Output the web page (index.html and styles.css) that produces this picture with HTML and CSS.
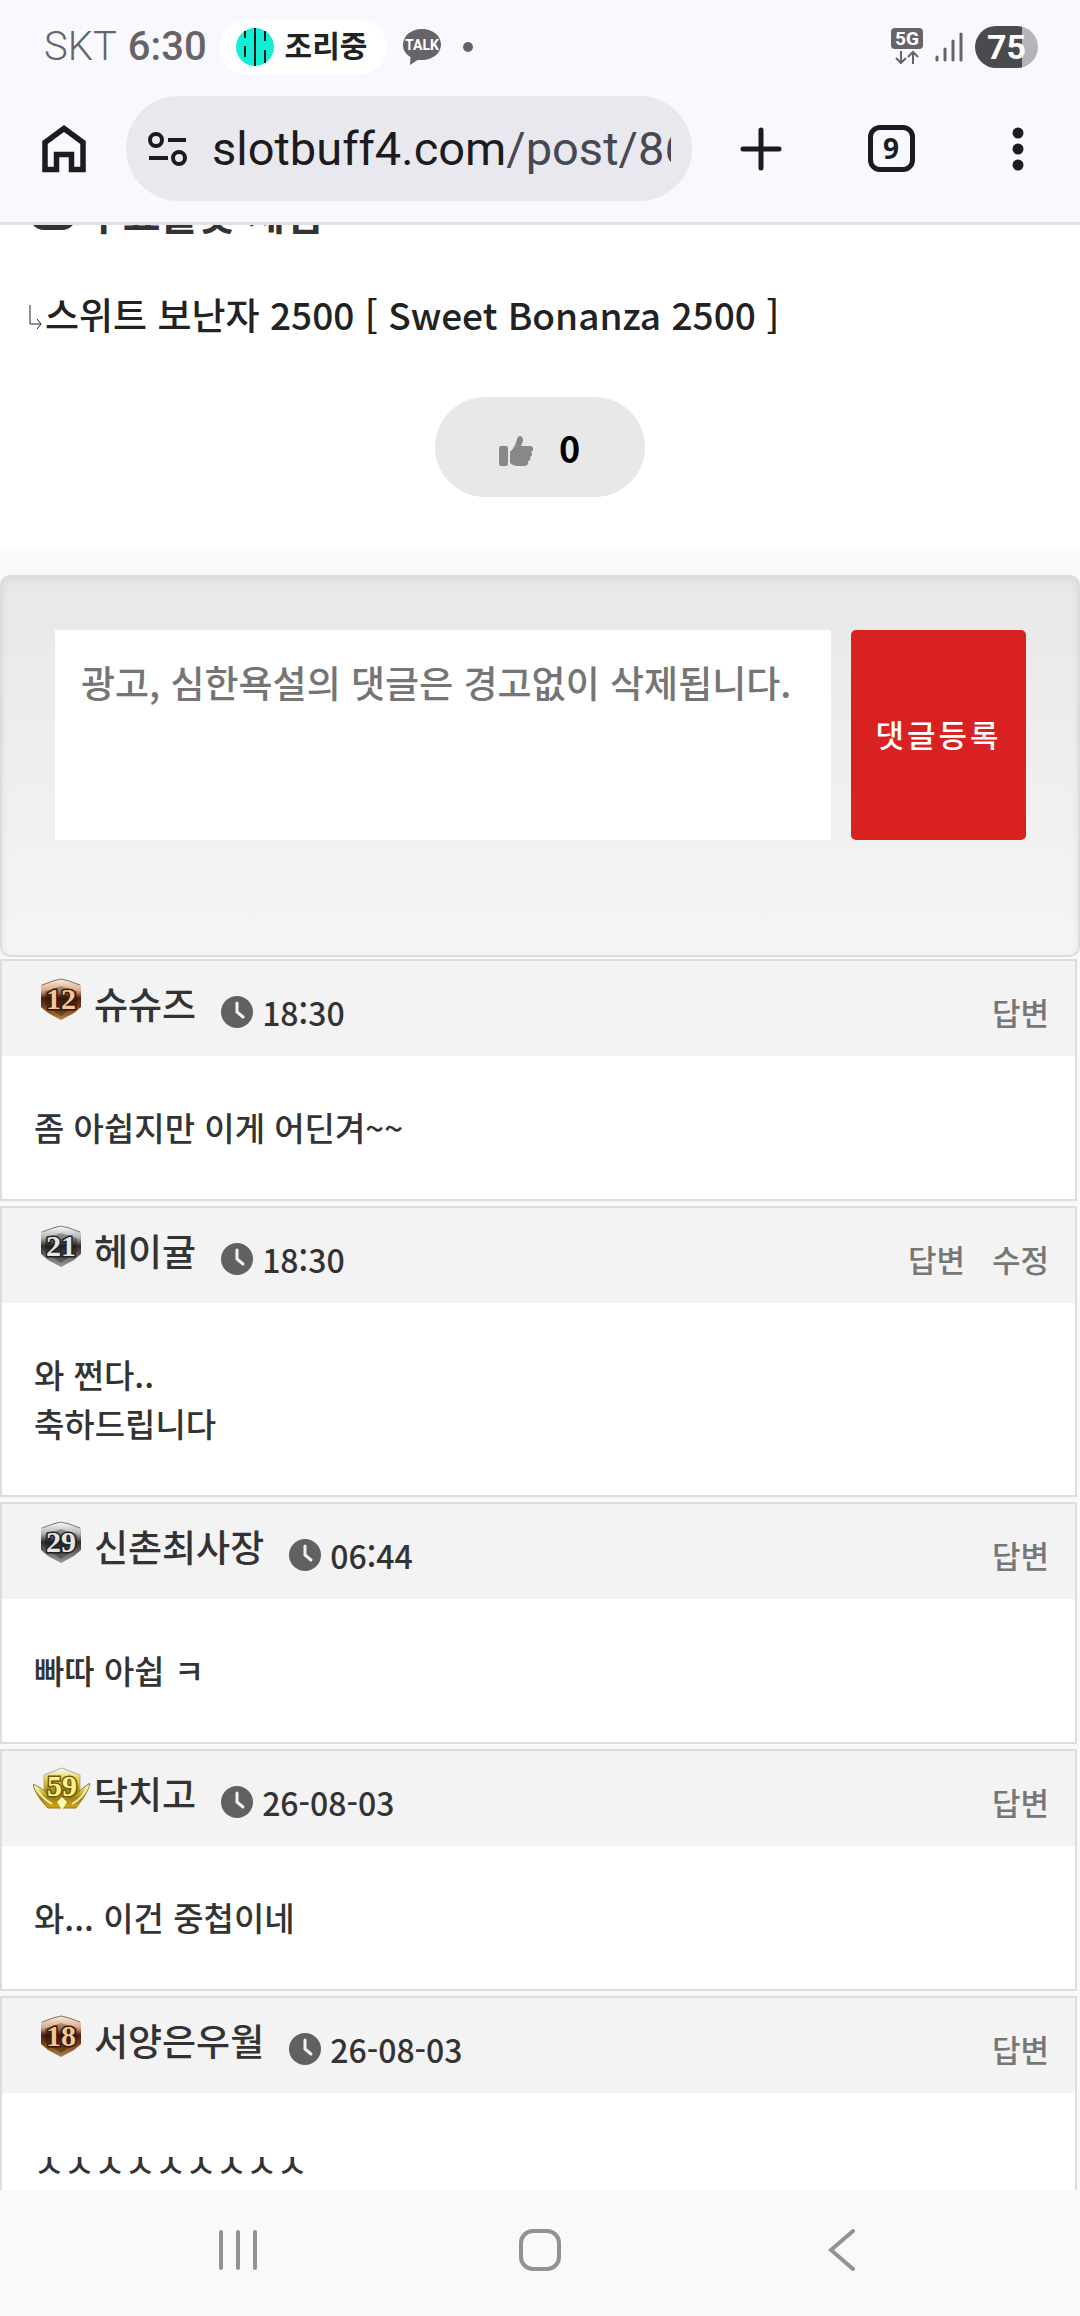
FILE: index.html
```html
<!DOCTYPE html>
<html lang="ko">
<head>
<meta charset="utf-8">
<meta name="viewport" content="width=device-width, initial-scale=1">
<title>스위트 보난자 2500</title>
<link rel="stylesheet" href="styles.css">
</head>
<body>
<svg class="defs" width="0" height="0" aria-hidden="true">
  <defs>
    <linearGradient id="bronze" x1="0" y1="0" x2="0" y2="1">
      <stop offset="0" stop-color="#fff3dc"/><stop offset=".3" stop-color="#d9a98a"/><stop offset=".48" stop-color="#4a1c0c"/><stop offset=".75" stop-color="#8a4a1c"/><stop offset="1" stop-color="#a8854c"/>
    </linearGradient>
    <linearGradient id="silver" x1="0" y1="0" x2="0" y2="1">
      <stop offset="0" stop-color="#ffffff"/><stop offset=".3" stop-color="#b5b5b5"/><stop offset=".5" stop-color="#2c2c2c"/><stop offset=".75" stop-color="#6a6a6a"/><stop offset="1" stop-color="#9a9a9a"/>
    </linearGradient>
    <linearGradient id="gold" x1="0" y1="0" x2="0" y2="1">
      <stop offset="0" stop-color="#ffffff"/><stop offset=".3" stop-color="#e2cd3c"/><stop offset=".6" stop-color="#9d8712"/><stop offset="1" stop-color="#d6a612"/>
    </linearGradient>
    <symbol id="clock" viewBox="0 0 32 32">
      <circle cx="16" cy="16" r="16" fill="#616161"/>
      <path d="M16 7v9l6 5" fill="none" stroke="#f3f3f3" stroke-width="3" stroke-linecap="round"/>
    </symbol>
    <symbol id="shield" viewBox="0 0 57 45">
      <path d="M28 2 36 4 48 9V31L41 37 28 44 15 37 8 31V9L20 4Z"/>
      <path d="M28 10 37 13 44 15V29L28 40 12 29V15L19 13Z" fill="#000" fill-opacity=".28"/>
      <path d="M9 9 20 5 28 3 36 5 47 9" fill="none" stroke="#777" stroke-width="1"/>
    </symbol>
  </defs>
</svg>

<div class="screen">
  <header class="chrome">
    <div class="status">
      <span class="carrier">SKT</span>
      <span class="time">6:30</span>
      <span class="chip">
        <svg width="38" height="38" viewBox="0 0 38 38" aria-hidden="true">
          <circle cx="19" cy="19" r="19" fill="#12eed4"/>
          <path d="M19 0V38M9 3V10M9 18V29M29 3V13M29 22V35" stroke="#0b1a18" stroke-width="2"/>
        </svg>
        조리중
      </span>
      <svg class="talk" width="38" height="36" viewBox="0 0 38 36" aria-hidden="true">
        <path d="M19 0C8 0 0 7 0 15.500c0 6 3 10 7.500 12.500L7 36l8-5.300c1 .2 3 .3 4 .3 11 0 19-7 19-15.500S30 0 19 0Z" fill="#666469"/>
        <text x="19" y="21" class="talk-text">TALK</text>
      </svg>
      <span class="dot"></span>
      <span class="spacer"></span>
      <svg width="32" height="38" viewBox="0 0 32 38" aria-hidden="true">
        <rect width="32" height="21" rx="4" fill="#666469"/>
        <text x="16" y="17" class="net-text">5G</text>
        <path d="M10 23V35M5 30l5 5 5-5M22 36V24M17 29l5-5 5 5" fill="none" stroke="#666469" stroke-width="2"/>
      </svg>
      <svg class="signal" width="30" height="32" viewBox="0 0 30 32" aria-hidden="true">
        <path d="M3 26v3M11 18v11M19 10v19M27 3v26" stroke="#666469" stroke-width="3" stroke-linecap="round"/>
      </svg>
      <span class="battery">75</span>
    </div>
    <div class="toolbar">
      <button class="tool" aria-label="홈">
        <svg width="44" height="48" viewBox="0 0 44 48"><path d="M3 17.500 22 3.500l19 14V44.500H29.500V29.500H14.500V44.500H3Z" fill="none" stroke="#1b1b20" stroke-width="5.500"/></svg>
      </button>
      <a class="address" href="#">
        <svg width="40" height="34" viewBox="0 0 40 34" aria-hidden="true">
          <g fill="none" stroke="#1b1b20" stroke-width="4"><circle cx="8" cy="8" r="6"/><circle cx="31" cy="26" r="6"/><path d="M20 8H38M1 26H20"/></g>
        </svg>
        <span class="url">slotbuff4.com<span class="path">/post/8640</span></span>
      </a>
      <div class="tools">
        <button class="tool" aria-label="새 탭"><svg width="42" height="44" viewBox="0 0 42 44"><path d="M21 3V41M3 22H39" stroke="#1b1b20" stroke-width="5" stroke-linecap="round"/></svg></button>
        <button class="tool" aria-label="탭 9개"><span class="tabs">9</span></button>
        <button class="tool" aria-label="메뉴"><svg width="12" height="44" viewBox="0 0 12 44" fill="#1b1b20"><circle cx="6" cy="6" r="5.500"/><circle cx="6" cy="22" r="5.500"/><circle cx="6" cy="38" r="5.500"/></svg></button>
      </div>
    </div>
  </header>

  <main class="page">
    <article class="post">
      <h2 class="title"><span class="title-icon"></span>무료슬롯 체험</h2>
      <p class="game"><svg width="14" height="26" viewBox="0 0 14 26" aria-hidden="true"><path d="M1 1V20H12M8 15l4 5-4 5" fill="none" stroke="#222" stroke-width="1"/></svg><a href="#">스위트 보난자 2500 [ Sweet Bonanza 2500 ]</a></p>
      <button class="like">
        <svg width="34" height="30" viewBox="0 0 34 30" aria-hidden="true" fill="#888"><rect y="10" width="9" height="20" rx="2"/><path d="M11 16c4-4 6-8 7-13 1-4 6-4 6 1 0 2-1 4-2 6h9c4 0 4 5 1 6 2 2 1 4-1 5 1 2 0 4-2 4 1 3-1 5-4 5h-5c-5 0-9-2-9-4Z"/></svg>
        <span>0</span>
      </button>
    </article>

    <form class="write">
      <textarea aria-label="댓글" placeholder="광고, 심한욕설의 댓글은 경고없이 삭제됩니다."></textarea>
      <button type="button">댓글등록</button>
    </form>

    <section class="comments">
      <article class="comment">
        <header>
          <svg class="level bronze" width="57" height="45" viewBox="0 0 57 45"><use href="#shield"/><text x="28" y="33">12</text></svg>
          <b>슈슈즈</b>
          <time><svg width="32" height="32"><use href="#clock"/></svg>18:30</time>
          <nav><a href="#">답변</a></nav>
        </header>
        <p>좀 아쉽지만 이게 어딘겨~~</p>
      </article>
      <article class="comment">
        <header>
          <svg class="level silver" width="57" height="45" viewBox="0 0 57 45"><use href="#shield"/><text x="28" y="33">21</text></svg>
          <b>헤이귤</b>
          <time><svg width="32" height="32"><use href="#clock"/></svg>18:30</time>
          <nav><a href="#">답변</a><a href="#">수정</a></nav>
        </header>
        <p>와 쩐다..<br>축하드립니다</p>
      </article>
      <article class="comment">
        <header>
          <svg class="level silver" width="57" height="45" viewBox="0 0 57 45"><use href="#shield"/><text x="28" y="33">29</text></svg>
          <b>신촌최사장</b>
          <time><svg width="32" height="32"><use href="#clock"/></svg>06:44</time>
          <nav><a href="#">답변</a></nav>
        </header>
        <p>빠따 아쉽 ㅋ</p>
      </article>
      <article class="comment">
        <header>
          <svg class="level gold" width="57" height="45" viewBox="0 0 57 45">
            <path d="M11 9 29 2 47 9V34L29 42 11 34Z" stroke="#aaa" stroke-width="1"/>
            <path d="M0 18C4 20 9 22 13 27L24 34 29 30 34 34 45 27C49 22 53 20 57 17 55 27 48 35 43 42H15C8 35 2 27 0 18Z" stroke="#94761a" stroke-width="1"/>
            <path d="M2 20C6 28 12 34 19 38M55 20C52 28 46 34 39 38" fill="none" stroke="#f4edc0" stroke-width="2"/>
            <path d="M29 31l5 5-5 8-5-8Z" fill="#fff6b8"/>
            <text x="29" y="30">59</text>
          </svg>
          <b>닥치고</b>
          <time><svg width="32" height="32"><use href="#clock"/></svg>26-08-03</time>
          <nav><a href="#">답변</a></nav>
        </header>
        <p>와... 이건 중첩이네</p>
      </article>
      <article class="comment">
        <header>
          <svg class="level bronze" width="57" height="45" viewBox="0 0 57 45"><use href="#shield"/><text x="28" y="33">18</text></svg>
          <b>서양은우월</b>
          <time><svg width="32" height="32"><use href="#clock"/></svg>26-08-03</time>
          <nav><a href="#">답변</a></nav>
        </header>
        <p>ㅅㅅㅅㅅㅅㅅㅅㅅㅅ</p>
      </article>
    </section>
  </main>

  <nav class="system">
    <button aria-label="최근 앱"><svg width="38" height="42" viewBox="0 0 38 42"><path d="M2 3V39M19 3V39M36 3V39" stroke="#929292" stroke-width="4" stroke-linecap="round"/></svg></button>
    <button aria-label="홈 화면"><svg width="42" height="42" viewBox="0 0 42 42"><rect x="2" y="2" width="38" height="38" rx="12" fill="none" stroke="#929292" stroke-width="4"/></svg></button>
    <button aria-label="뒤로"><svg width="28" height="44" viewBox="0 0 28 44"><path d="M25 3 3 22 25 41" fill="none" stroke="#929292" stroke-width="4" stroke-linecap="round"/></svg></button>
  </nav>
</div>
</body>
</html>
```

FILE: styles.css
```css
* { box-sizing: border-box; }

body {
  margin: 0;
  background: #f9f9f9;
  color: #333;
  font-family: "Noto Sans CJK KR", "Noto Sans", sans-serif;
  font-weight: 500;
}

button {
  padding: 0;
  border: 0;
  background: none;
  font: inherit;
  color: inherit;
}

a { color: inherit; text-decoration: none; }
svg { display: block; flex: none; }
.defs { position: absolute; }

.screen {
  display: flex;
  flex-direction: column;
  height: 100vh;
  overflow: hidden;
}

/* Browser chrome */
.chrome {
  flex: none;
  background: #f9f8fe;
  border-bottom: 3px solid #e2e1e8;
}

.status {
  display: flex;
  align-items: center;
  height: 96px;
  padding: 0 42px 3px 44px;
  font-family: Roboto, "Noto Sans CJK KR", sans-serif;
  font-size: 40px;
  color: #666469;
}
.carrier { font-weight: 300; }
.time { margin-left: 11px; font-weight: 500; }
.chip {
  display: flex;
  align-items: center;
  gap: 11px;
  height: 54px;
  margin-left: 13px;
  padding: 0 20px 0 16px;
  border-radius: 27px;
  background: #fff;
  font-size: 30px;
  font-weight: 700;
  line-height: 40px;
  color: #222;
}
.talk { margin-left: 16px; }
.talk-text {
  font: 700 14px Roboto, sans-serif;
  text-anchor: middle;
  fill: #fff;
}
.net-text {
  font: 700 19px Roboto, sans-serif;
  text-anchor: middle;
  fill: #fff;
}
.dot {
  width: 10px;
  height: 10px;
  margin-left: 22px;
  border-radius: 50%;
  background: #666469;
}
.spacer { flex: 1; }
.signal { margin-left: 11px; }
.battery {
  width: 63px;
  margin-left: 11px;
  border-radius: 21px;
  background: linear-gradient(to right, #4b4b4d 75%, #b5b4ba 75%);
  font-size: 34px;
  font-weight: 700;
  line-height: 42px;
  text-align: center;
  color: #fff;
}

.toolbar {
  display: flex;
  align-items: center;
  padding: 0 0 21px 42px;
}
.tool {
  display: flex;
  align-items: center;
  justify-content: center;
}
.address {
  display: flex;
  flex: 1;
  align-items: center;
  min-width: 0;
  height: 105px;
  margin: 0 4px 0 40px;
  padding: 0 21px 0 22px;
  border-radius: 53px;
  background: #e8e8ee;
  font: 400 47px Roboto, sans-serif;
  color: #1b1b20;
}
.url {
  flex: 1;
  margin-left: 24px;
  overflow: hidden;
  white-space: nowrap;
}
.path { color: #464853; }
.tools {
  display: grid;
  grid-template-columns: 130px 130px 124px;
}
.tabs {
  width: 47px;
  height: 47px;
  border: 5px solid #1b1b20;
  border-radius: 12px;
  font: 700 28px/36px "Open Sans", sans-serif;
  color: #1b1b20;
}

/* Page */
.page {
  flex: 1;
  min-height: 0;
  overflow: hidden;
}
.post {
  display: flex;
  flex-direction: column;
  height: 324px;
  padding: 0 26px;
  background: #fff;
  color: #222;
}
.title {
  display: flex;
  align-items: flex-end;
  gap: 9px;
  height: 60px;
  margin: -43px 0 0 4px;
  font-size: 41px;
  font-weight: 700;
  line-height: 60px;
  color: #333;
}
.title-icon {
  width: 46px;
  height: 40px;
  margin-bottom: 12px;
  border-radius: 14px;
  background: #333;
}
.game {
  display: flex;
  align-items: center;
  gap: 2px;
  margin: 42px 0 0 3px;
  font-size: 37px;
  line-height: 60px;
  white-space: nowrap;
}
.game svg { margin-top: 6px; }
.like {
  display: flex;
  align-items: center;
  align-self: center;
  gap: 26px;
  width: 210px;
  height: 100px;
  margin-top: 53px;
  padding-left: 64px;
  border-radius: 50px;
  background: #e8e8e8;
  font-size: 36px;
  font-weight: 700;
  color: #000;
}
.like svg { margin-top: 8px; }

.write {
  display: flex;
  gap: 20px;
  height: 382px;
  margin: 26px 0 2px;
  padding: 53px 52px 0 53px;
  border: 2px solid #dcdcdc;
  border-radius: 10px;
  background: linear-gradient(#e8e8e8, #f5f5f5);
  box-shadow: inset 0 3px 9px rgba(0, 0, 0, .07);
}
.write textarea {
  flex: 1;
  min-width: 0;
  height: 210px;
  padding: 28px 26px;
  border: 0;
  background: #fff;
  font: inherit;
  font-size: 37px;
  line-height: 48px;
  resize: none;
}
.write textarea::placeholder { color: #757575; }
.write button {
  width: 175px;
  height: 210px;
  padding-bottom: 4px;
  border-radius: 5px;
  background: #da2121;
  font-size: 31px;
  letter-spacing: 3px;
  color: #fff;
}

/* Comments */
.comments {
  display: grid;
  gap: 5px;
  margin-right: 3px;
}
.comment {
  border: 2px solid #ddd;
  background: #fff;
}
.comment header {
  display: flex;
  align-items: flex-start;
  height: 95px;
  padding: 15px 26px 0 31px;
  background: #f3f3f3;
}
.comment b {
  margin-left: 4px;
  font-size: 37px;
  font-weight: 500;
  line-height: 55px;
}
.comment time {
  display: flex;
  align-items: center;
  gap: 9px;
  margin-left: 25px;
  font-size: 32px;
  line-height: 72px;
}
.comment nav {
  display: flex;
  gap: 27px;
  margin-left: auto;
  font-size: 31px;
  line-height: 71px;
  color: #777;
}
.comment p {
  margin: 0;
  padding: 47px 32px;
  font-size: 33px;
  line-height: 49px;
}

.level text {
  font: 700 30px "Liberation Serif", serif;
  text-anchor: middle;
  paint-order: stroke;
  stroke-width: 3px;
}
.bronze { fill: url(#bronze); }
.bronze text { fill: #f0c898; stroke: #3a1608; }
.silver { fill: url(#silver); }
.silver text { fill: #e6e6e6; stroke: #222; }
.gold { fill: url(#gold); }
.gold text { fill: #fff08a; stroke: #6b5a08; }

/* System navigation */
.system {
  display: grid;
  flex: none;
  grid-template-columns: repeat(3, 1fr);
  height: 126px;
  padding: 0 87px 7px;
  background: #f9f9f9;
}
.system button {
  display: flex;
  align-items: center;
  justify-content: center;
}
```
